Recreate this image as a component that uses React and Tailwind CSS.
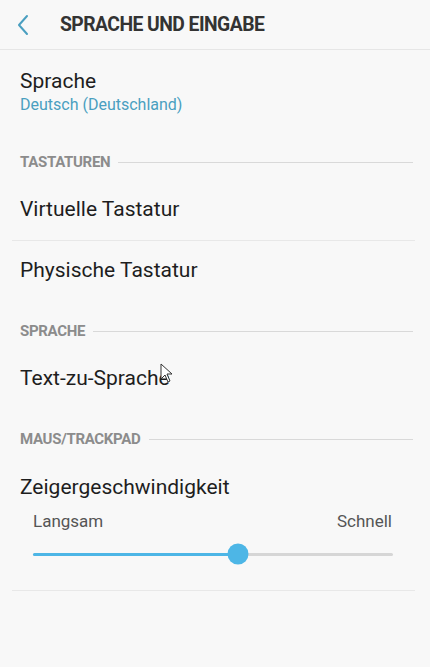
import React from 'react';

const font = { fontFamily: 'Roboto, "Noto Sans", sans-serif' };

const SectionHeader = ({ label }) => (
  <div className="flex items-center gap-2 pl-5 pr-[17px] pt-[20px] pb-[8px] h-[48px]">
    <span className="text-[15px] leading-[20px] font-bold text-[#8c8c8c] tracking-[-0.3px]">{label}</span>
    <div className="flex-1 h-px bg-[#d9d9d9]" />
  </div>
);

const Row = ({ title, divider }) => (
  <div className={`ml-3 mr-[15px] px-2 flex items-center ${divider ? 'h-[61px] border-b border-[#e8e8e8]' : 'h-[60px]'}`}>
    <span className="text-[21px] text-[#1e1e1e]">{title}</span>
  </div>
);

export default function App() {
  return (
    <div className="w-[430px] h-[667px] bg-[#f8f8f8] relative overflow-hidden" style={font}>
      <header className="h-[50px] flex items-center border-b border-[#e6e6e6]">
        <button className="w-[60px] h-full flex items-center pl-[16px]" aria-label="Zurück">
          <svg width="14" height="22" viewBox="0 0 14 22" fill="none">
            <polyline points="11,2 3,11 11,20" stroke="#4a9fc0" strokeWidth="2" strokeLinecap="round" strokeLinejoin="round" />
          </svg>
        </button>
        <h1 className="text-[21px] font-bold text-[#333] tracking-[-0.6px] scale-x-[0.92] origin-left whitespace-nowrap">SPRACHE UND EINGABE</h1>
      </header>

      <div className="px-5 pt-[17px] pb-[17px]">
        <div className="text-[21px] leading-[28px] text-[#1e1e1e]">Sprache</div>
        <div className="text-[16px] leading-[20px] text-[#4a9fc0]">Deutsch (Deutschland)</div>
      </div>

      <SectionHeader label="TASTATUREN" />
      <Row title="Virtuelle Tastatur" divider />
      <Row title="Physische Tastatur" />

      <SectionHeader label="SPRACHE" />
      <Row title="Text-zu-Sprache" />

      <SectionHeader label="MAUS/TRACKPAD" />
      <div className="ml-3 mr-[15px] border-b border-[#e8e8e8] pb-[26px]">
        <div className="px-2 h-[61px] flex items-center">
          <span className="text-[21px] text-[#1e1e1e]">Zeigergeschwindigkeit</span>
        </div>
        <div className="pl-[21px] pr-[23px] -mt-[9px] flex justify-between text-[17px] leading-[24px] text-[#555]">
          <span>Langsam</span>
          <span>Schnell</span>
        </div>
        <div className="pl-[21px] pr-[22px] mt-[11px] h-[20px] flex items-center">
          <div className="relative flex-1 h-[3px] bg-[#d6d6d6] rounded-full">
            <div className="absolute left-0 top-0 h-[3px] w-[57%] bg-[#4db6e6] rounded-full" />
            <div className="absolute left-[57%] top-1/2 -translate-x-1/2 -translate-y-1/2 w-[21px] h-[21px] rounded-full bg-[#4db6e6]" />
          </div>
        </div>
      </div>

      <svg className="absolute left-[160px] top-[363px]" width="13" height="20" viewBox="0 0 13 20">
        <path d="M1 1 L1 16 L5 12 L8 19 L10 18 L7 11 L12 11 Z" fill="#fff" stroke="#333" strokeWidth="1" strokeLinejoin="round" />
      </svg>
    </div>
  );
}
